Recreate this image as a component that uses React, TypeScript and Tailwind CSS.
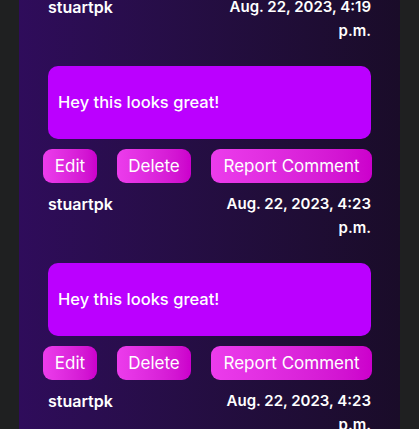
const comments = [
  { user: "stuartpk", date: "Aug. 22, 2023, 4:19 p.m.", body: "Hey this looks great!" },
  { user: "stuartpk", date: "Aug. 22, 2023, 4:23 p.m.", body: "Hey this looks great!" },
  { user: "stuartpk", date: "Aug. 22, 2023, 4:23 p.m.", body: "Hey this looks great!" },
];

function ActionButton({ label, width }: { label: string; width: string }) {
  return (
    <button
      className={`h-[34px] ${width} rounded-[9px] bg-gradient-to-r from-[#ec3cec] to-[#cc00cc] text-white text-[17px] leading-none`}
    >
      {label}
    </button>
  );
}

export default function App() {
  return (
    <div
      className="h-[429px] w-[419px] overflow-hidden bg-[#1f2021] flex justify-center"
      style={{ fontFamily: 'Inter, "DejaVu Sans", sans-serif' }}
    >
      <div className="w-[381px] h-full bg-gradient-to-r from-[#2f0c5b] to-[#1a0c29] px-[29px]">
        <div className="-mt-[5px]">
          {comments.map((c, idx) => (
            <div key={idx}>
              <div className="flex justify-between text-white font-semibold leading-[24px]">
                <span className="text-[16px]">{c.user}</span>
                <span className="w-[150px] text-right text-[15px]">{c.date}</span>
              </div>
              <div className="mt-[23px] h-[73px] rounded-[10px] bg-[#bb00ff] flex items-center px-[10px] text-white text-[16.5px] font-medium">
                {c.body}
              </div>
              <div className="mt-[10px] -ml-[5px] -mr-[1px] flex justify-between mb-[9px]">
                <ActionButton label="Edit" width="w-[54px]" />
                <ActionButton label="Delete" width="w-[74px]" />
                <ActionButton label="Report Comment" width="w-[161px]" />
              </div>
            </div>
          ))}
        </div>
      </div>
    </div>
  );
}
